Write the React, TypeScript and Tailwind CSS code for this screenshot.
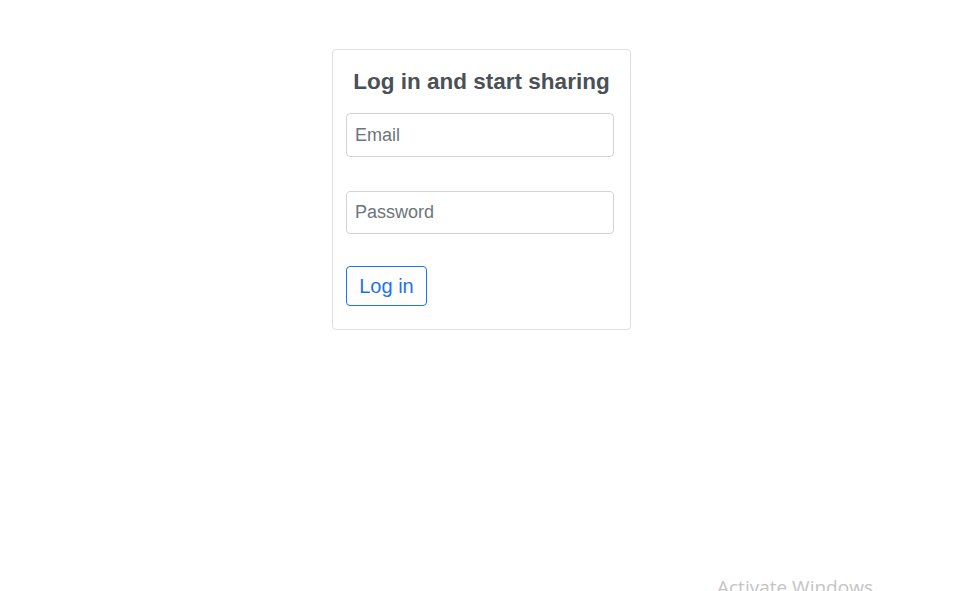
export default function App() {
  return (
    <div className="relative h-[591px] w-[959px] overflow-hidden bg-white" style={{ fontFamily: '"Liberation Sans", Arial, sans-serif' }}>
      <div className="ml-[332px] mt-[49px] flex w-[299px] flex-col rounded-[4px] border border-[#dcdfe3] px-[13px] pb-[23px] pt-[15px]">
        <h1 className="text-center text-[22.5px] font-bold leading-[34px] text-[#495057]">Log in and start sharing</h1>
        <input
          className="mt-[14px] h-[44px] w-[268px] rounded-[4px] border border-[#ced4da] px-[8px] text-[18px] text-[#495057] outline-none placeholder:text-[#6c757d]"
          placeholder="Email"
        />
        <input
          type="password"
          className="mt-[34px] h-[43px] w-[268px] rounded-[4px] border border-[#ced4da] px-[8px] text-[18px] text-[#495057] outline-none placeholder:text-[#6c757d]"
          placeholder="Password"
        />
        <div className="mt-[32px] flex">
          <button className="h-[40px] w-[81px] rounded-[4px] border border-[#1a73e8] text-[20px] text-[#1f72e6]">Log in</button>
        </div>
      </div>
      <div className="absolute left-[717px] top-[575px] text-[19px] leading-[24px] text-[#c4c4c4]" style={{ fontFamily: '"Open Sans", sans-serif' }}>
        Activate Windows
      </div>
    </div>
  );
}
